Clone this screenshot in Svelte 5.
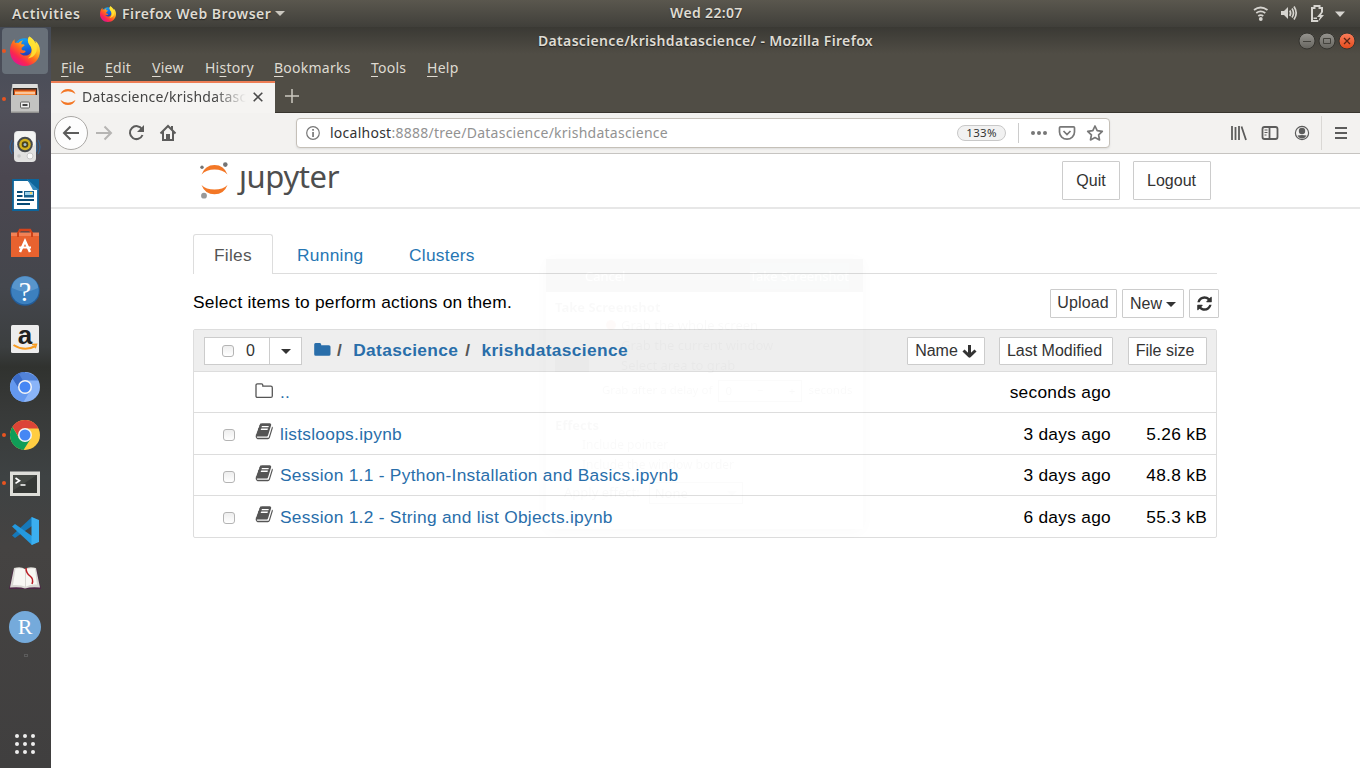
<script>
  const menus = [
    ['', 'F', 'ile', 44],
    ['', 'E', 'dit', 47],
    ['', 'V', 'iew', 53],
    ['Hi', 's', 'tory', 69],
    ['', 'B', 'ookmarks', 97],
    ['', 'T', 'ools', 56],
    ['', 'H', 'elp', 40]
  ];
  const files = [
    { name: '..', folder: true, modified: 'seconds ago', size: '' },
    { name: 'listsloops.ipynb', modified: '3 days ago', size: '5.26 kB' },
    { name: 'Session 1.1 - Python-Installation and Basics.ipynb', modified: '3 days ago', size: '48.8 kB' },
    { name: 'Session 1.2 - String and list Objects.ipynb', modified: '6 days ago', size: '55.3 kB' }
  ];
  const dock = ['firefox', 'files', 'music', 'writer', 'software', 'help', 'amazon', 'chromium', 'chrome', 'terminal', 'code', 'book', 'r'];
  const running = ['firefox', 'files', 'chrome', 'terminal'];
  const dots = [0, 1, 2, 3, 4, 5, 6, 7, 8];
</script>

{#snippet firefox(size)}
  <svg width={size} height={size} viewBox="0 0 32 32">
    <defs>
      <linearGradient id="ff{size}" x1=".85" y1=".1" x2=".2" y2=".9">
        <stop offset="0" stop-color="#fff14a" /><stop offset=".3" stop-color="#ffb81f" /><stop offset=".55" stop-color="#ff6a1c" /><stop offset=".8" stop-color="#fb2650" /><stop offset="1" stop-color="#e3178a" />
      </linearGradient>
      <linearGradient id="fb{size}" x1=".3" y1="0" x2=".5" y2="1">
        <stop offset="0" stop-color="#16a5f3" /><stop offset=".6" stop-color="#125dd8" /><stop offset="1" stop-color="#3a1f8f" />
      </linearGradient>
    </defs>
    <circle cx="15.5" cy="14" r="11.5" fill="url(#fb{size})" />
    <path fill="url(#ff{size})" d="M20.500 .5C18 4 19 7 22 11c2 4 1 8-3 9.500-4 1-7 0-8.500-3 2 1.500 4 .8 6-.5.5-1-1-1.500-2-1.500-2 0-2.500-1.500-2-3l3-2.500c0-1.500-2-1.300-3.500-1.300 0-2 1-3.400 2-4.200C12 5 10.500 6 9 7.500 8 7 6.500 7 5.500 7.500 4.700 6.500 4.700 5 5 3.500 1.500 6.500 0 11 0 16c0 9 7 16 16 16s16-7 16-16c0-5-2-8.500-5-11 .3 1 .5 2 .2 3C26 5 24 2.500 20.500.5z" />
    <path fill="#ffe534" opacity=".85" d="M20.500.5C18 4 19 7 22 11c3 5 1 10-3 13 8-1 12-9 8.200-16C26 5 24 2.500 20.500.5z" />
  </svg>
{/snippet}

{#snippet book()}
  <svg width="18.500" height="18.500" viewBox="0 0 1792 1792">
    <path fill="#555" d="M1703 478q40 57 18 129l-275 906q-19 64-76.500 107.500t-122.500 43.500h-923q-77 0-148.500-53.500t-99.500-131.500q-24-67-2-127 0-4 3-27t4-37q1-8-3-21.500t-3-19.500q2-11 8-21t16.500-23.500 16.500-23.500q23-38 45-91.500t30-91.500q3-10 .5-30t-.5-28q3-11 17-28t17-23q21-36 42-92t25-90q1-9-2.500-32t.5-28q4-13 22-30.500t22-22.500q19-26 42.500-84.500t27.500-96.500q1-8-3-25.500t-2-26.500q2-8 9-18t18-23 17-21q8-12 16.500-30.500t15-35 16-36 19.500-32 26.500-23.500 36-11.500 47.500 5.500l-1 3q38-9 51-9h761q74 0 114 56t18 130l-274 906q-36 119-71.500 153.500t-128.500 34.500h-869q-27 0-38 15-11 16-1 43 24 70 144 70h923q29 0 56-15.500t35-41.500l300-987q7-22 5-57 38 15 59 43zm-1064 2q-4 13 2 22.500t20 9.500h608q13 0 25.500-9.500t16.500-22.500l21-64q4-13-2-22.500t-20-9.500h-608q-13 0-25.500 9.500t-16.500 22.500zm-83 256q-4 13 2 22.500t20 9.500h608q13 0 25.500-9.500t16.500-22.500l21-64q4-13-2-22.500t-20-9.500h-608q-13 0-25.500 9.500t-16.500 22.500z" />
  </svg>
{/snippet}

<div class="desktop">
  <header class="panel">
    <span class="activities">Activities</span>
    <span class="app">{@render firefox(16)}<span class="appname">Firefox Web Browser</span><i class="tri"></i></span>
    <span class="clock">Wed 22:07</span>
    <span class="tray">
      <svg width="94" height="20" viewBox="0 0 94 20" fill="none" stroke="#d6d4cf">
        <path stroke-width="1.800" d="M1 6q6.500-5 13.500 0M3.300 9q4.200-3.200 9 0M5.300 12q2.300-1.700 5 0" />
        <circle cx="7.800" cy="15" r="1.900" fill="#d6d4cf" stroke="none" />
        <path fill="#d6d4cf" stroke="none" d="M28 7h3l4-4v12l-4-4h-3z" />
        <path stroke-width="1.700" d="M36.800 6.500q1.700 2.700 0 5.500M39 4.500q3 4.500 0 9M41 2.500q4.400 6.500 0 13" />
        <path stroke-width="2" d="M65 17h-6V4h2.500V2h5v2H69v4" />
        <path fill="#d6d4cf" stroke="none" d="M68 8l-4 5h3l-2 5 6-7h-3l2-3zM60.500 13.500H64V15h-3.500z" />
        <path fill="#d6d4cf" stroke="none" d="M82 7.500h10l-5 5.500z" />
      </svg>
    </span>
  </header>

  <div class="below">
    <nav class="dock">
      {#each dock as item}
        <div class="slot" class:active={item === 'firefox'}>
          {#if running.includes(item)}<i class="pip"></i>{/if}
          {#if item === 'firefox'}
            {@render firefox(30)}
          {:else}
            <svg width="32" height="32" viewBox="0 0 32 32">
              {#if item === 'files'}
                <path fill="#b8b8b6" d="M3.500 1h25l1.500 8v20.500H2V9z" /><path fill="#dededc" d="M3.500 1h25v4h-25z" />
                <path fill="#352a24" d="M4 5h24v7H4z" /><path fill="#c94f1a" d="M5 6.500h22V12H5z" /><path fill="#f58a3b" d="M6 8h20v4H6z" /><path fill="#fff" d="M6 9.500h20v1H6z" />
                <path fill="#c3c3c1" d="M2 12h28v17H2z" /><path fill="#929290" d="M2 28.500h28V30H2z" /><rect x="11.500" y="19" width="9" height="6" rx="1" fill="#eee" stroke="#626260" /><path fill="#444" d="M13.500 21h5v2h-5z" />
              {:else if item === 'music'}
                <path stroke="#36618e" stroke-width="1.200" fill="none" d="M3 9q-4 7 0 14M29 9q4 7 0 14M5 11q-2 5 0 10M27 11q2 5 0 10" />
                <rect x="5" y="0" width="22" height="31" rx="4" fill="#e1e1e0" /><rect x="6" y=".5" width="20" height="15" rx="4" fill="#f4f4f3" />
                <circle cx="16" cy="13.500" r="7.800" fill="#45494d" /><circle cx="16" cy="13.500" r="5.800" fill="#d3b11f" /><circle cx="16" cy="13.500" r="3.300" fill="#4a431b" /><circle cx="16" cy="13.500" r="1.500" fill="#a6bfd2" />
                <circle cx="10" cy="25" r="1.800" fill="#c9c9c9" /><circle cx="21" cy="25" r="3" fill="#fafafa" stroke="#c8c8c8" />
              {:else if item === 'writer'}
                <path fill="#fff" stroke="#0d659b" stroke-width="1.800" d="M4 1h15l10 9v21H4z" /><path fill="#0d659b" d="M18 0h12v11z" /><path fill="#3589bd" d="M18 0l12 11h-6z" />
                <path stroke="#074a75" stroke-width="2" d="M8 13h5.500M8 17h5.500M8 21h17M8 25h13" /><path fill="#155f8c" d="M15 12h10v6.500H15z" /><path fill="#9ed1e9" d="M16 13h8v3h-8z" /><circle cx="22" cy="14" r="1.200" fill="#f8cf5c" />
              {:else if item === 'software'}
                <path fill="none" stroke="#d4441d" stroke-width="2.500" d="M9 7l2-4h10l2 4" /><path fill="#f28155" d="M2 5.500h28V30H2z" /><path fill="#e8622f" d="M2 9h28v21H2z" /><path fill="#cb4218" d="M8 5h2v5H8zM22 5h2v5h-2z" />
                <path fill="none" stroke="#fff" stroke-width="2.500" d="M11 25l5-11 5 11" /><path stroke="#fff" stroke-width="2" d="M10 20.500h12" />
              {:else if item === 'help'}
                <circle cx="16" cy="16" r="14.800" fill="#235c98" /><circle cx="16" cy="15.500" r="13.800" fill="#3c80bf" /><path fill="#6ba4d5" d="M3 13a13 12 0 0 1 26 0q-13 7-26 0z" opacity=".6" />
                <text x="16" y="25.500" text-anchor="middle" class="serif" font-size="28" fill="#fff">?</text>
              {:else if item === 'amazon'}
                <rect x="2" y="2" width="28" height="28" rx="1.500" fill="#ededed" /><text x="16" y="21" text-anchor="middle" class="bold" font-size="26" fill="#202020">a</text>
                <path fill="none" stroke="#f79b20" stroke-width="2" d="M4.500 22q11 7 22 1" /><path fill="none" stroke="#f79b20" stroke-width="1.500" d="M23 21.500l4.500-.2-1.300 4" />
              {:else if item === 'chromium'}
                <circle cx="16" cy="16" r="15" fill="#8ab4f8" />
                <path fill="#6498ee" d="M3.500 7.700A15 15 0 0 0 14.500 31L21 20H11z" /><path fill="#3a6bc6" d="M3.500 7.700A15 15 0 0 1 16 1v9l-6 8z" /><path fill="#5283d8" d="M10 3A15 15 0 0 1 29.500 9.500H14z" />
                <circle cx="16" cy="16" r="7" fill="#f5f5f5" /><circle cx="16" cy="16" r="5.500" fill="#4687f4" />
              {:else if item === 'chrome'}
                <circle cx="16" cy="16" r="15" fill="#ffcd42" />
                <path fill="#109d58" d="M3.500 7.700A15 15 0 0 0 14.500 31L21.500 20 10 19z" /><path fill="#db4437" d="M3.500 7.700A15 15 0 0 1 29.500 9.500H16l-6 9z" />
                <circle cx="16" cy="16" r="7" fill="#f5f5f5" /><circle cx="16" cy="16" r="5.500" fill="#4687f4" />
              {:else if item === 'terminal'}
                <path fill="#deded9" d="M1 4.500h30V29H1z" /><path fill="#353835" d="M4 8h24v18H4z" /><path fill="#555953" d="M4 8h24L4 23.500z" opacity=".5" /><path fill="none" stroke="#fff" stroke-width="1.700" d="M6.500 11l4 2.700-4 2.700M11.500 18h5" />
              {:else if item === 'code'}
                <path fill="#1678b9" d="M23 2L3 20.500l3 2.500L30 6z" /><path fill="#2499df" d="M3 11.500L6 9l24 17-7 4z" /><path fill="#3baff0" d="M22.500 2L30 5v22l-7.500 3z" />
              {:else if item === 'book'}
                <path fill="#4e2747" d="M0 26L4 6h24l4 20z" /><path fill="#d9d7d3" d="M1 24.500L5 5q7-2 11 1 4-3 11-1l4 19.500q-9-1-15 1-5-2-15-1z" /><path fill="#f8f7f4" d="M4 22L6.500 5.500q6-1 9.500 1v17q-4-2-12-1.500zM17 6.500q5-2 9-1l2 16q-6-.5-11 2z" /><path fill="none" stroke="#ba1d25" stroke-width="1.500" d="M17 5q0 5 4 8t2 8" />
              {:else}
                <circle cx="16" cy="16" r="16" fill="#75aadb" /><text x="16" y="23" text-anchor="middle" class="serif" font-size="22" fill="#fff">R</text>
              {/if}
            </svg>
          {/if}
        </div>
      {/each}
      <i class="speck"></i>
      <div class="grid">{#each dots as d}<i></i>{/each}</div>
    </nav>

    <main class="window">
      <div class="title">
        <span class="name">Datascience/krishdatascience/ - Mozilla Firefox</span>
        <svg class="controls" width="58" height="18" viewBox="0 0 58 18">
          <defs><linearGradient id="gr" x2="0" y2="1"><stop stop-color="#979590" /><stop offset="1" stop-color="#65645e" /></linearGradient><linearGradient id="or" x2="0" y2="1"><stop stop-color="#fa7e5c" /><stop offset="1" stop-color="#e34a1b" /></linearGradient></defs>
          <g stroke="#35342f"><circle cx="9" cy="9" r="8" fill="url(#gr)" /><circle cx="29" cy="9" r="8" fill="url(#gr)" /><circle cx="49" cy="9" r="8" fill="url(#or)" /></g>
          <path fill="none" stroke="#43423c" d="M5 9.500h8M25.500 6.500h7v5h-7z" /><path stroke="#592414" stroke-width="1.300" d="M46 6l6 6M52 6l-6 6" />
        </svg>
      </div>
      <div class="menubar">
        {#each menus as [before, key, after, width]}
          <span style:width="{width}px">{before}<u>{key}</u>{after}</span>
        {/each}
      </div>
      <div class="tabstrip">
        <div class="tab">
          <svg width="16" height="18" viewBox="0 0 16 18"><path fill="#f37726" d="M.5 6Q2.500 1 8 1t7.500 5Q12 3.300 8 3.300T.5 6zM.5 12Q2.500 17 8 17t7.500-5Q12 14.700 8 14.700T.5 12z" /></svg>
          <span class="tabname">Datascience/krishdatascience/</span>
          <svg class="x" width="10" height="10" viewBox="0 0 10 10"><path stroke="#4a4a4a" stroke-width="1.600" d="M.7.7l8.600 8.600M9.300.7L.7 9.300" /></svg>
        </div>
        <svg class="plus" width="14" height="14" viewBox="0 0 14 14"><path stroke="#ccc9c0" stroke-width="1.500" d="M7 0v14M0 7h14" /></svg>
      </div>
      <div class="toolbar">
        <svg class="nav" width="130" height="40" viewBox="0 0 130 40" fill="none" stroke="#5c5c5b" stroke-width="2">
          <circle cx="20" cy="20" r="16.500" fill="#fdfdfd" stroke="#aaa8a5" stroke-width="1" />
          <path d="M28 20H13M19.500 13.500L13 20l6.500 6.500" /><path stroke="#b6b5b3" d="M45 20h15M53.500 13.500L60 20l-6.500 6.500" />
          <path d="M91 16.200A6.500 6.500 0 1 0 91.500 22" /><path fill="#5c5c5b" stroke="none" d="M93 12v7h-7z" />
          <path d="M109.500 20.500L117 13l7.500 7.500M112 18.500V27h10v-8.500" /><path fill="#5c5c5b" stroke="none" d="M115 21h4v6h-4zM120 13h2v4h-2z" />
        </svg>
        <div class="url">
          <svg width="16" height="16" viewBox="0 0 16 16"><circle cx="8" cy="8" r="6.300" fill="none" stroke="#777" stroke-width="1.200" /><path fill="#777" d="M7.200 4h1.700v1.700H7.200zM7.200 7h1.700v5H7.200z" /></svg>
          <span class="addr"><b>localhost</b>:8888/tree/Datascience/krishdatascience</span>
          <span class="zoom">133%</span>
          <i class="bar"></i>
          <svg class="acts" width="74" height="20" viewBox="0 0 74 20" fill="none" stroke="#777" stroke-width="1.700">
            <g fill="#777" stroke="none"><circle cx="3" cy="10" r="2" /><circle cx="9" cy="10" r="2" /><circle cx="15" cy="10" r="2" /></g>
            <path d="M30.500 3.800h13q1 0 1 1v4.200a7.500 7.200 0 0 1-15 0V4.800q0-1 1-1zM33.500 8l3.500 3.500L40.500 8" />
            <path stroke-linejoin="round" d="M65 3l2.200 4.600 5.100.7-3.700 3.500.9 5.100-4.500-2.400-4.500 2.400.9-5.100-3.700-3.500 5.100-.7z" />
          </svg>
        </div>
        <svg class="right" width="134" height="40" viewBox="0 0 134 40" fill="none" stroke="#5c5c5b" stroke-width="1.800">
          <path d="M7 13v14M10.500 14v13M14 13v14M16.500 13.500L21 27" />
          <rect x="37.500" y="14" width="15" height="12" rx="2" /><path d="M44.500 14v12" /><path stroke-width="1" d="M39.500 17h3M39.500 19.500h3M39.500 22h2" />
          <circle cx="77" cy="20" r="6.600" stroke-width="1.200" /><g fill="#5c5c5b" stroke="none"><circle cx="77" cy="18" r="3.200" /><path d="M72.500 22.500q4.500-1 9 0-1.500 3-4.500 3t-4.500-3z" /></g>
          <path stroke="#dad8d5" stroke-width="1" d="M96.500 3v34" /><path stroke-width="2" d="M110 15h12M110 20h12M110 25h12" />
        </svg>
      </div>

      <section class="page">
        <div class="brandbar">
          <svg class="planet" width="32" height="38" viewBox="0 0 32 38"><path fill="#f37726" d="M2.500 12.500Q6 3 15.500 3T28.500 12.500Q23.500 7.500 15.500 7.500T2.500 12.500zM2.500 23Q7 27.500 15.500 27.500t13-4.500Q25 32.300 15.500 32.300T2.500 23z" /><circle cx="3" cy="5.200" r="1.700" fill="#747474" /><circle cx="26.300" cy="2.600" r="2.300" fill="#747474" /><circle cx="5" cy="33.700" r="2.900" fill="#999" /></svg>
          <span class="wordmark">jupyter</span>
          <button class="big quit">Quit</button><button class="big logout">Logout</button>
        </div>
        <div class="content">
          <div class="tabs"><span class="on">Files</span><span class="run">Running</span><span class="clu">Clusters</span></div>
          <div class="actions">
            <span class="hint">Select items to perform actions on them.</span>
            <button class="upload">Upload</button><button class="new">New<i class="caret"></i></button>
            <button class="refresh"><svg width="17" height="17" viewBox="0 0 1792 1792"><path fill="#333" d="M1639 1056q0 5-1 7-64 268-268 434.500t-478 166.500q-146 0-282.500-55t-243.500-157l-129 129q-19 19-45 19t-45-19-19-45v-448q0-26 19-45t45-19h448q26 0 45 19t19 45-19 45l-137 137q71 66 161 102t187 36q134 0 250-65t186-179q11-17 53-117 8-23 30-23h192q13 0 22.500 9.500t9.500 22.500zm25-800v448q0 26-19 45t-45 19h-448q-26 0-45-19t-19-45 19-45l138-138q-148-137-349-137-134 0-250 65t-186 179q-11 17-53 117-8 23-30 23h-199q-13 0-22.500-9.500t-9.500-22.500v-7q65-268 270-434.500t480-166.500q146 0 284 55.500t245 156.500l130-129q19-19 45-19t45 19 19 45z" /></svg></button>
          </div>
          <div class="list">
            <div class="head">
              <div class="select"><span class="all"><i class="cb"></i>0</span><span class="drop"><i class="caret"></i></span></div>
              <svg class="fold" width="17" height="15" viewBox="0 0 17 15"><path fill="#296eaa" d="M1.500 1h4.300q1.400 0 1.400 1.500v.7h7.600q1.700 0 1.700 1.600v7.400q0 1.600-1.700 1.600H1.700Q.2 13.800.2 12.200v-9.700Q.2 1 1.500 1z" /></svg>
              <span class="crumbs"><em>/</em><b class="c1">Datascience</b><em>/</em><b>krishdatascience</b></span>
              <button class="sname">Name<svg width="15" height="15" viewBox="0 0 15 15"><path fill="none" stroke="#333" stroke-width="3" stroke-linejoin="round" d="M7.500 1v11M1.500 6.500l6 5.700 6-5.700" /></svg></button>
              <button class="smod">Last Modified</button><button class="ssize">File size</button>
            </div>
            {#each files as file}
              <div class="row">
                <span class="check">{#if !file.folder}<i class="cb"></i>{/if}</span>
                <span class="icon" class:dir={file.folder}>{#if file.folder}<svg width="19" height="16" viewBox="0 0 19 16"><path fill="none" stroke="#555" stroke-width="1.300" d="M2.500.8h4q1.300 0 1.300 1.500v.9h8q1.500 0 1.500 1.500v8.200q0 1.500-1.500 1.500H2.500Q1 14.400 1 12.900V2.300Q1 .8 2.500.8z" /></svg>{:else}{@render book()}{/if}</span>
                <span class="fname">{file.name}</span>
                <span class="mod">{file.modified}</span><span class="size">{file.size}</span>
              </div>
            {/each}
          </div>
        </div>

        <div class="ghost">
          <div class="ghead"><span>Cancel</span><span class="take">Take Screenshot</span></div>
          <strong>Take Screenshot</strong>
          <div class="opts"><i class="radio"></i><span>Grab the whole screen</span><i></i><span>Grab the current window</span><i class="cam"></i><span>Select area to grab</span></div>
          <div class="delay"><span>Grab after a delay of</span><span class="spin"><span>0</span><span>−</span><span>+</span></span><span>seconds</span></div>
          <strong>Effects</strong>
          <div class="fx">Include pointer</div><div class="fx">Include the window border</div>
          <div class="apply">Apply effect: <span>None<i class="tri"></i></span></div>
        </div>
      </section>
    </main>
  </div>
</div>

<style>
  :global(body) { margin: 0; overflow: hidden; }
  * { box-sizing: border-box; }
  i, em { font-style: normal; }
  svg { display: block; flex: none; }
  .desktop { width: 1360px; height: 768px; display: flex; flex-direction: column; font: 14px/20px "Noto Sans", sans-serif; overflow: hidden; white-space: nowrap; }
  .panel { height: 27px; flex: none; display: grid; grid-template-columns: 100px 570px 583px 107px; align-items: center; background: linear-gradient(#5a574e, #403f3a); color: #dfdbd2; font-weight: 600; text-shadow: 0 1px 1px #222; }
  .activities { padding-left: 12px; letter-spacing: .6px; }
  .app { display: flex; align-items: center; gap: 6px; }
  .appname { letter-spacing: .47px; margin-right: -2px; }
  .clock { letter-spacing: .35px; margin-top: -1px; }
  .tri { border: 5px solid transparent; border-top-color: #cac7bf; border-bottom: 0; width: 0; height: 0; }
  .below { flex: 1; display: flex; min-height: 0; }
  .dock { width: 51px; flex: none; display: flex; flex-direction: column; align-items: center; background: linear-gradient(#454b57 0, #50505a 80px, #4b4750 150px, #44464c 260px, #3c3f40 320px, #30322f 340px, #383a39 385px, #3e4243 450px, #454342 520px, #403f3f 741px); }
  .slot { position: relative; width: 46px; height: 46px; margin: 1px 2px 1px 1px; flex: none; display: flex; align-items: center; justify-content: center; border-radius: 4px; }
  .slot.active { background: #687079; }
  .pip { position: absolute; left: 0; top: 21px; width: 4px; height: 4px; border-radius: 50%; background: #e95420; }
  .speck { width: 4px; height: 3px; margin-top: 3px; border: 1px solid #5b5b5b; }
  .grid { margin: auto 2px 14px 0; display: grid; grid-template-columns: repeat(3, 4px); gap: 4px; }
  .grid i { width: 4px; height: 4px; border-radius: 50%; background: #eee; }
  .serif { font-family: "Liberation Serif", serif; }
  .bold { font-family: "Liberation Sans", sans-serif; font-weight: bold; }
  .window { flex: 1; display: flex; flex-direction: column; min-width: 0; background: #fff; }
  .title { height: 27px; flex: none; background: linear-gradient(#3a3934, #504d45); display: flex; justify-content: flex-end; align-items: center; color: #dfdbd2; font-weight: 600; }
  .name { width: 336px; margin-right: 424px; letter-spacing: .33px; text-shadow: 0 1px 1px #222; }
  .controls { margin-right: 4px; }
  .menubar { height: 27px; flex: none; background: #504d45; display: flex; padding: 4px 0 0 10px; color: #dfdbd2; font-size: 14px; letter-spacing: .25px; }
  .menubar u { text-underline-offset: 3px; }
  .tabstrip { height: 32px; flex: none; display: flex; background: #504d45; border-bottom: 1px solid #38352f; }
  .tab { width: 224px; height: 32px; display: flex; align-items: center; background: #f5f4f2; border-top: 2px solid #ee7e55; padding: 0 0 2px 9px; color: #444; }
  .tabname { margin-left: 6px; width: 164px; overflow: hidden; letter-spacing: .22px; mask-image: linear-gradient(90deg, #000 132px, transparent 164px); }
  .x { margin-left: 7px; }
  .plus { margin: 8px 0 0 10px; }
  .toolbar { height: 41px; flex: none; display: flex; align-items: center; background: #f3f2f0; border-bottom: 1px solid #c6c4c1; }
  .url { margin-left: 115px; width: 814px; height: 30px; border: 1px solid #c5c0b8; border-radius: 4px; background: #fff; display: flex; align-items: center; padding-left: 8px; box-shadow: 0 1px 2px #ddd; color: #929292; }
  .addr { width: 627px; margin-left: 9px; letter-spacing: .25px; }
  .addr b { font-weight: 400; color: #333; }
  .zoom { width: 49px; height: 16px; border: 1px solid #c8c8c8; border-radius: 8px; background: #f1f1f1; color: #333; font-size: 11.500px; line-height: 14px; text-align: center; letter-spacing: .3px; }
  .bar { width: 1px; height: 20px; background: #ccc; margin: 0 11px 0 12px; }
  .right { margin-left: 115px; }
  .page { position: relative; flex: 1; font-family: "Liberation Sans", sans-serif; font-size: 17.330px; letter-spacing: .28px; color: #000; }
  .brandbar { height: 55px; display: flex; border-bottom: 2px solid #e7e7e7; padding: 7px 0 0 147px; }
  .planet { margin: 1px 0 0 1px; }
  .wordmark { width: 823px; height: 42px; margin: -4px 0 0 8px; font: 31px/38px "Noto Sans", sans-serif; letter-spacing: -.4px; color: #4e4e4e; clip-path: polygon(-5px 100%, -5px 13.500px, 9px 13.500px, 9px 0, 100% 0, 100% 100%); }
  button { margin: 0; padding: 0; flex: none; font: 16px/20px "Liberation Sans", sans-serif; color: #333; background: #fff; border: 1px solid #ccc; border-radius: 1px; display: flex; align-items: center; justify-content: center; }
  .big { height: 39px; }
  .quit { width: 58px; }
  .logout { width: 78px; margin-left: 13px; padding-right: 1px; }
  .content { margin: 25px 0 0 142px; width: 1026px; }
  .tabs { width: 1024px; height: 40px; border-bottom: 1px solid #ddd; display: flex; line-height: 43px; color: #2676b3; }
  .on { width: 80px; height: 40px; border: 1px solid #ddd; border-bottom: 0; border-radius: 3px 3px 0 0; background: #fff; color: #555; padding-left: 20px; line-height: 41px; }
  .run { margin-left: 24px; width: 112px; }
  .actions { height: 55px; display: flex; padding-top: 15px; }
  .actions button { height: 29px; }
  .hint { width: 857px; line-height: 27px; letter-spacing: .22px; }
  .actions .upload { width: 67px; padding: 0 1px 2px 0; letter-spacing: .15px; }
  .new { width: 62px; margin-left: 5px; gap: 4px; }
  .refresh { width: 30px; margin-left: 5px; }
  .caret { width: 0; height: 0; border: 5px solid transparent; border-top-color: #333; border-bottom: 0; margin-top: 1px; }
  .list { width: 1024px; height: 209px; border: 1px solid #ddd; border-radius: 2px; }
  .head { height: 41px; background: #eee; display: flex; align-items: center; padding: 0 9px 0 10px; }
  .head button { height: 28px; padding-top: 1px; }
  .select { display: flex; width: 98px; height: 28px; border: 1px solid #ccc; background: #fff; font-size: 16px; color: #333; }
  .all { width: 65px; border-right: 1px solid #ccc; display: flex; align-items: center; gap: 12px; padding-left: 17px; }
  .drop { flex: 1; display: flex; align-items: center; justify-content: center; padding-top: 1px; }
  .cb { display: block; width: 12px; height: 12px; border: 1px solid #b4b4b4; border-radius: 3px; background: linear-gradient(#eee, #fff); }
  .fold { margin: -3px 0 0 12px; }
  .crumbs { width: 576px; padding-left: 6px; color: #296eaa; letter-spacing: .36px; line-height: 26px; margin-top: -2px; }
  .crumbs em { color: #555; font-weight: bold; margin-right: 11px; }
  .c1 { margin-right: 7px; }
  .sname { width: 78px; gap: 4px; }
  .smod { width: 114px; margin-left: 14px; padding-right: 3px; }
  .ssize { width: 79px; margin-left: 15px; padding-right: 5px; }
  .row { height: 41px; border-top: 1px solid #ddd; display: flex; align-items: center; }
  .row:nth-child(odd) { height: 42px; }
  .check { width: 61px; padding: 3px 0 0 29px; }
  .icon { width: 25px; padding-bottom: 4px; }
  .icon.dir { padding-bottom: 2px; }
  .fname { width: 580px; color: #296eaa; padding-top: 1px; }
  .row:nth-child(even) .fname { padding-top: 0; }
  .mod { width: 251px; text-align: right; }
  .size { width: 96px; text-align: right; }
  .ghost { position: absolute; left: 495px; top: 105px; width: 317px; height: 270px; border-radius: 4px 4px 0 0; opacity: .02; box-shadow: 0 2px 15px #000; font: 13px/20px "Noto Sans", sans-serif; letter-spacing: 0; pointer-events: none; }
  .ghead { height: 33px; background: #222; color: #fff; display: flex; align-items: center; padding: 0 14px 0 39px; justify-content: space-between; margin-bottom: 5px; }
  .take { background: #174d35; padding: 3px 0; }
  strong { margin-left: 9px; }
  .opts { display: grid; grid-template: repeat(3, 20px) / 66px auto; margin-top: -2px; }
  .opts i { width: 10px; height: 10px; margin: 5px 0 0 60px; border-radius: 5px; }
  .radio { background: #d40; }
  .opts .cam { width: 34px; height: 17px; margin: 0 0 0 9px; background: #555; border-radius: 0; }
  .opts span { padding-left: 9px; }
  .delay { display: flex; margin: 5px 0 13px 56px; gap: 6px; font-size: 11.500px; }
  .spin { display: flex; width: 84px; justify-content: space-between; border: 1px solid #777; padding: 0 6px; }
  .fx { padding-left: 36px; font-size: 12px; }
  .apply { display: flex; margin: 7px 0 0 18px; }
  .apply span { display: flex; align-items: center; justify-content: space-between; margin-left: 9px; border: 1px solid #777; width: 94px; padding: 0 5px; }
</style>
